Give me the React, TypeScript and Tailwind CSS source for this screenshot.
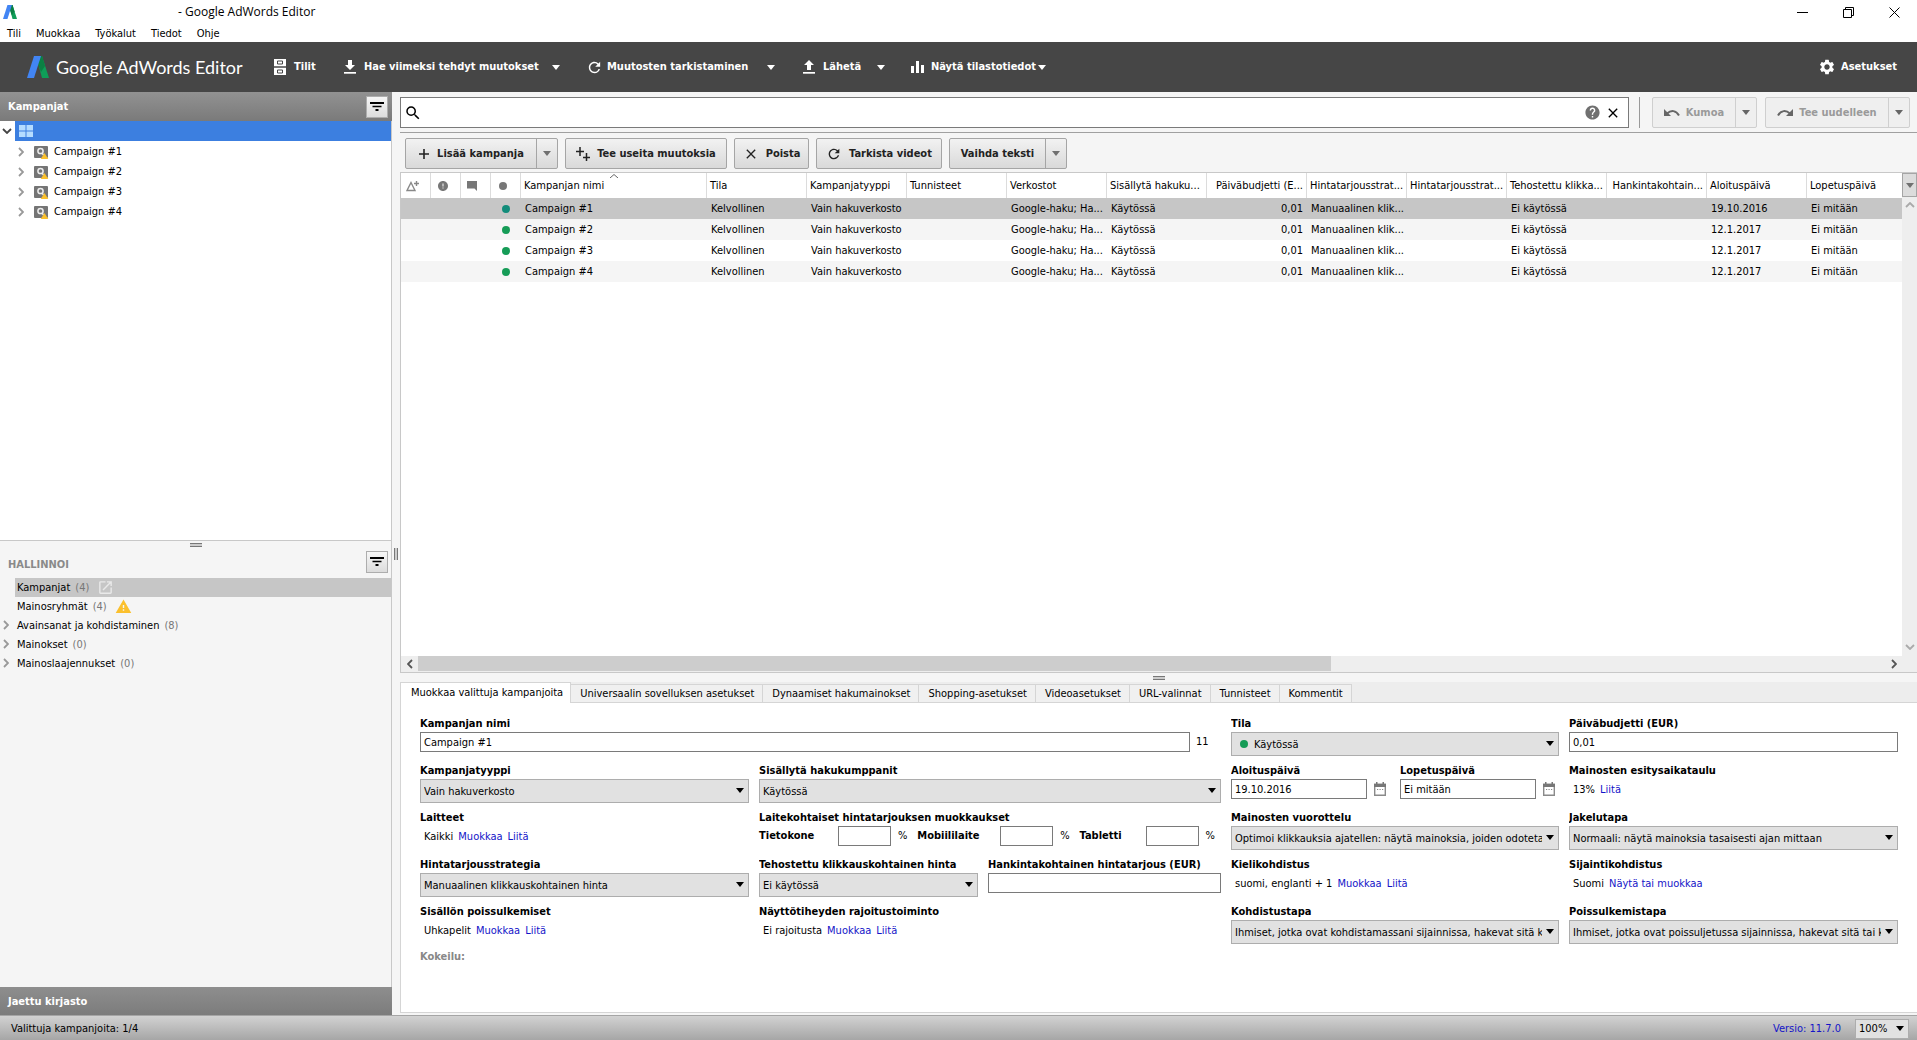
import { useState } from 'react';
import type { ReactNode } from 'react';
import { MdClose, MdError, MdHelp, MdOpenInNew, MdRefresh, MdSearch, MdSettings, MdWarning } from 'react-icons/md';

const campaigns = [
  { name: 'Campaign #1', start: '19.10.2016' },
  { name: 'Campaign #2', start: '12.1.2017' },
  { name: 'Campaign #3', start: '12.1.2017' },
  { name: 'Campaign #4', start: '12.1.2017' },
];

const columns = [
  { label: 'Tila' },
  { label: 'Kampanjatyyppi' },
  { label: 'Tunnisteet' },
  { label: 'Verkostot' },
  { label: 'Sisällytä hakuku...' },
  { label: 'Päiväbudjetti (E...', right: true },
  { label: 'Hintatarjousstrat...' },
  { label: 'Hintatarjousstrat...' },
  { label: 'Tehostettu klikka...' },
  { label: 'Hankintakohtain...', right: true },
  { label: 'Aloituspäivä' },
];

const manageItems = [
  { label: 'Kampanjat', count: 4, icon: 'open' },
  { label: 'Mainosryhmät', count: 4, icon: 'warning' },
  { label: 'Avainsanat ja kohdistaminen', count: 8, expandable: true },
  { label: 'Mainokset', count: 0, expandable: true },
  { label: 'Mainoslaajennukset', count: 0, expandable: true },
];

const tabs = [
  'Muokkaa valittuja kampanjoita',
  'Universaalin sovelluksen asetukset',
  'Dynaamiset hakumainokset',
  'Shopping-asetukset',
  'Videoasetukset',
  'URL-valinnat',
  'Tunnisteet',
  'Kommentit',
];

function Logo({ className }: { className: string }) {
  return (
    <svg viewBox="0 0 22 22" className={className} aria-hidden="true">
      <path d="M9 0h6l7 22h-7z" fill="#0f9d58" />
      <path d="M12 0h3l3 10-4 6-3-8z" fill="#0b8043" />
      <path d="M7 0h7L7 22H0z" fill="#4285f4" />
    </svg>
  );
}

function Caret({ className = '' }: { className?: string }) {
  return (
    <svg viewBox="0 0 8 5" className={`h-[5px] w-2 shrink-0 ${className}`} fill="currentColor" aria-hidden="true">
      <path d="M0 0h8L4 5z" />
    </svg>
  );
}

function Chevron({ className = '' }: { className?: string }) {
  return (
    <svg viewBox="0 0 6 10" className={`h-[10px] w-[6px] shrink-0 ${className}`} fill="none" stroke="currentColor" strokeWidth="1.8" aria-hidden="true">
      <path d="M1 1l4 4-4 4" />
    </svg>
  );
}

function PlusIcon() {
  return (
    <svg viewBox="0 0 12 12" className="h-3 w-3" stroke="currentColor" strokeWidth="1.6" aria-hidden="true">
      <path d="M6 1v10M1 6h10" />
    </svg>
  );
}

function DoublePlusIcon() {
  return (
    <svg viewBox="0 0 14 14" className="h-[14px] w-[14px]" stroke="currentColor" strokeWidth="1.5" aria-hidden="true">
      <path d="M4 0v9M0 4.500h8M10.500 6v8M7 10.500h7" />
    </svg>
  );
}

function TransferIcon({ up }: { up?: boolean }) {
  return (
    <svg viewBox="0 0 12 14" className="h-[14px] w-3" fill="currentColor" aria-hidden="true">
      <path d={up ? 'M6 0l5 5H8v5H4V5H1z' : 'M4 0h4v5h3l-5 5-5-5h3z'} />
      <path d="M0 12h12v1.700H0z" />
    </svg>
  );
}

function CabinetIcon() {
  return (
    <svg viewBox="0 0 12 16" className="h-4 w-3" fill="none" aria-hidden="true">
      <path d="M0 0h12v7.300H0zM0 8.700h12V16H0z" fill="#fff" />
      <path d="M3.500 2h5v3h-5zM3.500 11h5v3h-5z" stroke="#464646" strokeWidth="1" />
    </svg>
  );
}

function BarsIcon() {
  return (
    <svg viewBox="0 0 13 12" className="h-3 w-[13px]" fill="currentColor" aria-hidden="true">
      <path d="M0 5h3v7H0zM5 0h3v12H5zM10 4h3v8h-3z" />
    </svg>
  );
}

function TurnIcon({ flip }: { flip?: boolean }) {
  return (
    <svg viewBox="0 0 16 8" className="h-2 w-4" fill="none" aria-hidden="true">
      <g transform={flip ? 'translate(16 0) scale(-1 1)' : undefined}>
        <path d="M0 0v7h7z" fill="#666" />
        <path d="M3 4.500C7 1 12 1 15 6.500" stroke="#666" strokeWidth="2" />
      </g>
    </svg>
  );
}

function CalendarIcon() {
  return (
    <svg viewBox="0 0 12 14" className="h-[14px] w-3" fill="none" aria-hidden="true">
      <path d="M.7 2.500h10.600v10.800H.7z" stroke="#8a8a8a" strokeWidth="1.400" />
      <path d="M0 1.800h12V5H0zM2 0h1.500v2H2zM8.500 0H10v2H8.500z" fill="#777" />
      <path d="M3 7.500h1.200M5.500 7.500h1.200M8 7.500h1.200" stroke="#8a8a8a" strokeWidth="1.200" />
    </svg>
  );
}

function CampaignIcon() {
  return (
    <svg viewBox="0 0 15 15" className="h-[15px] w-[15px] shrink-0" fill="none" aria-hidden="true">
      <rect y="1" width="14" height="12" rx="1" fill="#757575" />
      <circle cx="6.500" cy="6" r="2.600" stroke="#eee" strokeWidth="1.500" />
      <path d="M8 8l1.500 2" stroke="#eee" strokeWidth="1.400" />
      <path d="M10.500 8l3.800 6H6.700z" fill="#fbc02d" />
    </svg>
  );
}

function FilterButton() {
  return (
    <button aria-label="Suodata" className="grid h-[22px] w-[22px] place-items-center border border-[#adadad] bg-gradient-to-b from-[#f6f6f6] to-[#dcdcdc] text-black">
      <svg viewBox="0 0 14 9" className="h-[9px] w-[14px]" fill="currentColor" aria-hidden="true">
        <path d="M0 0h14v2H0zM2.500 3.700h9v1.600h-9zM5.500 7h3v2h-3z" />
      </svg>
    </button>
  );
}

function MenuButton({ icon, label, width, caret = true }: { icon: ReactNode; label: string; width: string; caret?: boolean }) {
  return (
    <button className={`flex h-full items-center text-left ${width}`}>
      <span className="flex w-5 shrink-0">{icon}</span>
      <span className="whitespace-nowrap">{label}</span>
      {caret && <Caret className="mr-1 ml-auto" />}
    </button>
  );
}

function ToolButton({ icon, label, width, split }: { icon?: ReactNode; label: string; width: string; split?: boolean }) {
  return (
    <div className={`flex h-[31px] rounded-xs border border-[#a5a5a5] bg-gradient-to-b from-[#f2f2f2] to-[#d9d9d9] font-bold text-[#222] ${width}`}>
      <button className="flex flex-1 items-center justify-center gap-[7px] whitespace-nowrap">
        {icon}
        {label}
      </button>
      {split && (
        <button aria-label={`${label}: lisää`} className="grid w-[21px] place-items-center border-l border-[#a5a5a5] text-[#707070]">
          <Caret />
        </button>
      )}
    </div>
  );
}

function HistoryButton({ icon, label, width }: { icon: ReactNode; label: string; width: string }) {
  return (
    <div className={`flex h-[31px] rounded-xs border border-[#cfcfcf] bg-[#efefef] font-bold text-[#9a9a9a] ${width}`}>
      <button disabled className="flex flex-1 items-center justify-center gap-[6px] whitespace-nowrap">
        {icon}
        {label}
      </button>
      <button disabled aria-label={`${label}: lisää`} className="grid w-[21px] place-items-center border-l border-[#cfcfcf] text-[#666]">
        <Caret />
      </button>
    </div>
  );
}

function Label({ htmlFor, children }: { htmlFor?: string; children: ReactNode }) {
  return (
    <label htmlFor={htmlFor} className="block h-4 truncate font-bold leading-4">
      {children}
    </label>
  );
}

const inputClass = 'h-5 min-w-0 border border-[#7a7a7a] bg-white px-[3px] outline-none';

function SelectField({ id, label, value, dot }: { id: string; label: string; value: string; dot?: boolean }) {
  return (
    <div className="min-w-0">
      <Label htmlFor={id}>{label}</Label>
      <div className="relative">
        <select
          id={id}
          className={`h-6 w-full appearance-none border border-[#adadad] bg-[#e1e1e1] pt-px pr-4 outline-none ${dot ? 'pl-[22px]' : 'pl-[3px]'}`}
        >
          <option>{value}</option>
        </select>
        {dot && <span className="pointer-events-none absolute top-2 left-[9px] h-2 w-2 rounded-full bg-[#169c57]" />}
        <Caret className="pointer-events-none absolute top-[9px] right-[5px]" />
      </div>
    </div>
  );
}

function LinkField({ label, value, links }: { label: string; value: string; links: string[] }) {
  return (
    <div className="min-w-0">
      <Label>{label}</Label>
      <div className="flex h-6 gap-[5px] pl-1 leading-[22px]">
        <span>{value}</span>
        {links.map((l) => (
          <a key={l} href="#" className="text-[#1414c8]">
            {l}
          </a>
        ))}
      </div>
    </div>
  );
}

function DateField({ id, label, value }: { id: string; label: string; value: string }) {
  return (
    <div className="min-w-0 flex-1">
      <Label htmlFor={id}>{label}</Label>
      <div className="flex items-center">
        <input id={id} defaultValue={value} className={`${inputClass} flex-1`} />
        <button aria-label={`${label}: kalenteri`} className="w-[23px] pl-[7px]">
          <CalendarIcon />
        </button>
      </div>
    </div>
  );
}

function BidField({ id, label, width }: { id: string; label: string; width: string }) {
  return (
    <div className="flex items-center">
      <label htmlFor={id} className={`font-bold ${width}`}>
        {label}
      </label>
      <input id={id} className={`${inputClass} w-[53px]`} />
      <span className="ml-[7px]">%</span>
    </div>
  );
}

function Sidebar() {
  return (
    <aside className="flex w-[392px] shrink-0 flex-col">
      <div className="flex h-[29px] shrink-0 items-center justify-between bg-gradient-to-b from-[#929292] to-[#7a7a7a] pr-1 pl-2 font-bold text-white">
        <h2>Kampanjat</h2>
        <FilterButton />
      </div>
      <div className="flex-[419] border-r border-b border-[#c8c8c8] bg-white">
        <div className="flex h-5 items-center">
          <span className="grid w-[13px] place-items-center text-[#444]">
            <Chevron className="rotate-90" />
          </span>
          <div className="ml-[2px] flex h-full flex-1 items-center bg-[#3c7fe0] pl-1">
            <svg viewBox="0 0 14 12" className="h-3 w-[14px]" fill="#b5dcff" aria-hidden="true">
              <path d="M0 0h6.500v5.500H0zM7.500 0H14v5.500H7.500zM0 6.500h6.500V12H0zM7.500 6.500H14V12H7.500z" />
            </svg>
          </div>
        </div>
        <ul className="pt-px">
          {campaigns.map((c) => (
            <li key={c.name} className="flex h-5 items-center pl-[18px]">
              <Chevron className="mr-[10px] text-[#999]" />
              <CampaignIcon />
              <span className="ml-[5px]">{c.name}</span>
            </li>
          ))}
        </ul>
      </div>
      <div className="flex h-[10px] shrink-0 justify-center border-r border-[#c8c8c8] pt-[2px]">
        <span className="h-1 w-3 border-y border-[#777] bg-[#ccc]" />
      </div>
      <div className="flex-[437] border-r border-[#c8c8c8]">
        <div className="flex h-[27px] items-start justify-between pr-[3px] pl-2 font-bold text-[#8a8a8a]">
          <h2 className="leading-7">HALLINNOI</h2>
          <FilterButton />
        </div>
        <ul>
          {manageItems.map((item, i) => (
            <li key={item.label} className="flex h-[19px] items-center">
              <span className="w-[15px] pl-[3px] text-[#999]">{item.expandable && <Chevron />}</span>
              <span className={`flex h-full flex-1 items-center pt-px pl-[2px] ${i === 0 ? 'bg-[#c6c6c6]' : ''}`}>
                {item.label}
                <span className="ml-[5px] text-[#777]">({item.count})</span>
                {item.icon === 'open' && <MdOpenInNew className="ml-2 h-[17px] w-[17px] text-[#e9e9e9]" />}
                {item.icon === 'warning' && <MdWarning className="ml-2 h-[17px] w-[17px] text-[#fbc02d]" />}
              </span>
            </li>
          ))}
        </ul>
      </div>
      <h2 className="h-7 shrink-0 bg-gradient-to-b from-[#8e8e8e] to-[#7c7c7c] pl-2 leading-[30px] font-bold text-white">Jaettu kirjasto</h2>
    </aside>
  );
}

function CampaignTable() {
  const th = 'overflow-hidden border-r border-[#dcdcdc] pl-[3px] pt-px font-normal whitespace-nowrap';
  return (
    <table className="w-full table-fixed border-separate border-spacing-0 text-left">
      <colgroup>
        <col className="w-[30px]" />
        <col className="w-[30px]" />
        <col className="w-[30px]" />
        <col className="w-[30px]" />
        <col className="w-[186px]" />
        {columns.map((_, i) => (
          <col key={i} className="w-[100px]" />
        ))}
        <col />
      </colgroup>
      <thead>
        <tr className="h-[25px]">
          <th className={th} aria-label="Muutokset">
            <svg viewBox="0 0 14 12" className="ml-[2px] h-3 w-[14px]" fill="none" stroke="#888" strokeWidth="1.400" aria-hidden="true">
              <path d="M1 10.500L5 2.500l4 8zM10.500 1v5M8 3.500h5" />
            </svg>
          </th>
          <th className={th} aria-label="Virheet">
            <MdError className="ml-[3px] h-3 w-3 text-[#777]" />
          </th>
          <th className={th} aria-label="Kommentit">
            <svg viewBox="0 0 10 10" className="ml-[3px] h-[10px] w-[10px]" fill="#777" aria-hidden="true">
              <path d="M0 0h10v10L7.500 7.500H0z" />
            </svg>
          </th>
          <th className={th} aria-label="Tila">
            <span className="ml-[5px] block h-2 w-2 rounded-full bg-[#777]" />
          </th>
          <th className={`${th} relative`}>
            <svg viewBox="0 0 8 4" className="absolute top-px left-1/2 h-1 w-2 -translate-x-1/2" fill="none" stroke="#666" aria-hidden="true">
              <path d="M0 4l4-3.500L8 4" />
            </svg>
            Kampanjan nimi
          </th>
          {columns.map((c, i) => (
            <th key={i} className={`${th} ${c.right ? 'pr-[3px] text-right' : ''}`}>
              {c.label}
            </th>
          ))}
          <th className="overflow-hidden pt-px pl-[3px] font-normal whitespace-nowrap">Lopetuspäivä</th>
        </tr>
      </thead>
      <tbody>
        {campaigns.map((c, i) => (
          <tr
            key={c.name}
            className={`h-[21px] [&>td]:overflow-hidden [&>td]:pl-1 [&>td]:whitespace-nowrap ${i === 0 ? 'bg-[#c6c6c6]' : 'odd:bg-white even:bg-[#f5f5f5]'}`}
          >
            <td />
            <td />
            <td />
            <td>
              <span className={`ml-[7px] block h-2 w-2 rounded-full ${i === 0 ? 'bg-[#128c7a]' : 'bg-[#169c57]'}`} />
            </td>
            <td>{c.name}</td>
            <td>Kelvollinen</td>
            <td>Vain hakuverkosto</td>
            <td />
            <td>Google-haku; Ha...</td>
            <td>Käytössä</td>
            <td className="pr-1 text-right">0,01</td>
            <td>Manuaalinen klik...</td>
            <td />
            <td>Ei käytössä</td>
            <td />
            <td>{c.start}</td>
            <td>Ei mitään</td>
          </tr>
        ))}
      </tbody>
    </table>
  );
}

function EditPanel() {
  const [active, setActive] = useState(0);
  return (
    <section className="mb-[2px] border-b border-l border-[#d5d5d5] bg-white">
      <div role="tablist" className="flex h-[21px] items-end bg-[#ededed]">
        {tabs.map((t, i) => (
          <button
            key={t}
            role="tab"
            aria-selected={i === active}
            onClick={() => setActive(i)}
            className={
              i === active
                ? 'h-[21px] border-t border-r border-[#d5d5d5] bg-white pr-[7px] pl-[10px] whitespace-nowrap'
                : 'h-[19px] border-t border-r border-b border-[#d5d5d5] bg-[#f0f0f0] pr-2 pl-[9px] whitespace-nowrap'
            }
          >
            {t}
          </button>
        ))}
        <span className="h-full flex-1 border-b border-[#d5d5d5]" />
      </div>
      <form className="grid grid-cols-[329fr_462fr_328fr_329fr] gap-x-[10px] gap-y-[7px] pt-[13px] pr-[19px] pb-[49px] pl-[19px]">
        <div className="col-span-2 min-w-0">
          <Label htmlFor="name">Kampanjan nimi</Label>
          <div className="flex items-center">
            <input id="name" defaultValue="Campaign #1" className={`${inputClass} flex-1`} />
            <span className="w-[31px] pl-[6px]">11</span>
          </div>
        </div>
        <SelectField id="status" label="Tila" value="Käytössä" dot />
        <div className="min-w-0">
          <Label htmlFor="budget">Päiväbudjetti (EUR)</Label>
          <input id="budget" defaultValue="0,01" className={`${inputClass} block w-full`} />
        </div>

        <SelectField id="type" label="Kampanjatyyppi" value="Vain hakuverkosto" />
        <SelectField id="partners" label="Sisällytä hakukumppanit" value="Käytössä" />
        <div className="flex min-w-0 gap-[10px]">
          <DateField id="start" label="Aloituspäivä" value="19.10.2016" />
          <DateField id="end" label="Lopetuspäivä" value="Ei mitään" />
        </div>
        <LinkField label="Mainosten esitysaikataulu" value="13%" links={['Liitä']} />

        <LinkField label="Laitteet" value="Kaikki" links={['Muokkaa', 'Liitä']} />
        <fieldset className="min-w-0">
          <legend className="h-4 font-bold leading-4">Laitekohtaiset hintatarjouksen muokkaukset</legend>
          <div className="flex justify-between pr-[6px]">
            <BidField id="desktop" label="Tietokone" width="w-[79px]" />
            <BidField id="mobile" label="Mobiililaite" width="w-[83px]" />
            <BidField id="tablet" label="Tabletti" width="w-[66px]" />
          </div>
        </fieldset>
        <SelectField id="rotation" label="Mainosten vuorottelu" value="Optimoi klikkauksia ajatellen: näytä mainoksia, joiden odotetaan" />
        <SelectField id="delivery" label="Jakelutapa" value="Normaali: näytä mainoksia tasaisesti ajan mittaan" />

        <SelectField id="strategy" label="Hintatarjousstrategia" value="Manuaalinen klikkauskohtainen hinta" />
        <div className="grid min-w-0 grid-cols-[219fr_233fr] gap-[10px]">
          <SelectField id="ecpc" label="Tehostettu klikkauskohtainen hinta" value="Ei käytössä" />
          <div className="min-w-0">
            <Label htmlFor="cpa">Hankintakohtainen hintatarjous (EUR)</Label>
            <input id="cpa" className={`${inputClass} block w-full`} />
          </div>
        </div>
        <LinkField label="Kielikohdistus" value="suomi, englanti + 1" links={['Muokkaa', 'Liitä']} />
        <LinkField label="Sijaintikohdistus" value="Suomi" links={['Näytä tai muokkaa']} />

        <LinkField label="Sisällön poissulkemiset" value="Uhkapelit" links={['Muokkaa', 'Liitä']} />
        <LinkField label="Näyttötiheyden rajoitustoiminto" value="Ei rajoitusta" links={['Muokkaa', 'Liitä']} />
        <SelectField id="targeting" label="Kohdistustapa" value="Ihmiset, jotka ovat kohdistamassani sijainnissa, hakevat sitä kos" />
        <SelectField id="exclusion" label="Poissulkemistapa" value="Ihmiset, jotka ovat poissuljetussa sijainnissa, hakevat sitä tai ka" />

        <p className="leading-3 font-bold text-[#888]">Kokeilu:</p>
      </form>
    </section>
  );
}

export default function App() {
  return (
    <div className="flex h-screen flex-col bg-[#f5f5f5] font-['DejaVu_Sans_Condensed','DejaVu_Sans',sans-serif] text-[11px] leading-4 text-black">
      {/* window title and menus */}
      <header className="shrink-0 bg-white">
        <div className="flex h-6 items-center pr-[17px] pl-[3px]">
          <Logo className="h-[14px] w-[14px]" />
          <h1 className="ml-[161px] font-['Open_Sans',sans-serif] text-[12px]">- Google AdWords Editor</h1>
          <div className="ml-auto flex gap-[35px]">
            <button aria-label="Pienennä">
              <svg viewBox="0 0 11 11" className="h-[11px] w-[11px]" stroke="#000" aria-hidden="true">
                <path d="M0 5.500h11" />
              </svg>
            </button>
            <button aria-label="Palauta">
              <svg viewBox="0 0 11 11" className="h-[11px] w-[11px]" stroke="#000" fill="none" aria-hidden="true">
                <path d="M.5 2.500h8v8h-8zM2.500 2.500v-2h8v8h-2" />
              </svg>
            </button>
            <button aria-label="Sulje">
              <svg viewBox="0 0 11 11" className="h-[11px] w-[11px]" stroke="#000" aria-hidden="true">
                <path d="M.5.5l10 10M10.500.5l-10 10" />
              </svg>
            </button>
          </div>
        </div>
        <nav className="flex h-[18px] items-center gap-[15px] pt-px pl-[7px]">
          {['Tili', 'Muokkaa', 'Työkalut', 'Tiedot', 'Ohje'].map((m) => (
            <button key={m}>{m}</button>
          ))}
        </nav>
      </header>

      {/* dark toolbar */}
      <div className="flex h-[50px] shrink-0 items-center bg-[#464646] pr-5 pl-[27px] font-bold text-white">
        <Logo className="h-[22px] w-[22px]" />
        <span className="ml-[7px] w-[218px] font-['Lato',sans-serif] text-[18px] font-normal whitespace-nowrap">Google AdWords Editor</span>
        <MenuButton icon={<CabinetIcon />} label="Tilit" width="w-[70px]" caret={false} />
        <MenuButton icon={<TransferIcon />} label="Hae viimeksi tehdyt muutokset" width="w-[220px] mr-[23px]" />
        <MenuButton icon={<MdRefresh className="-ml-px h-[17px] w-[17px]" />} label="Muutosten tarkistaminen" width="w-[192px] mr-[24px]" />
        <MenuButton icon={<TransferIcon up />} label="Lähetä" width="w-[86px] mr-[22px]" />
        <MenuButton icon={<BarsIcon />} label="Näytä tilastotiedot" width="w-[139px]" />
        <button className="ml-auto flex items-center gap-[5px]">
          <MdSettings className="h-[18px] w-[18px]" />
          Asetukset
        </button>
      </div>

      <main className="flex min-h-0 flex-1">
        <Sidebar />
        <div className="flex w-2 shrink-0 items-center justify-center">
          <span className="h-3 w-1 border-x border-[#777] bg-[#ccc]" />
        </div>

        <div className="flex min-w-0 flex-1 flex-col">
          <div className="flex h-[41px] shrink-0 items-start border-b border-[#a0a0a0] pt-[5px] pr-[7px]">
            <div className="flex h-[31px] min-w-0 flex-1 items-center border border-[#7a7a7a] bg-white px-[3px]">
              <MdSearch className="h-[18px] w-[18px]" />
              <input aria-label="Haku" className="h-full min-w-0 flex-1 outline-none" />
              <MdHelp className="h-[17px] w-[17px] text-[#707070]" />
              <button aria-label="Tyhjennä" className="mr-1 ml-1">
                <MdClose className="h-4 w-4" />
              </button>
            </div>
            <span className="mr-3 ml-[10px] h-[31px] w-px bg-[#999]" />
            <HistoryButton icon={<TurnIcon />} label="Kumoa" width="mr-2 w-[105px]" />
            <HistoryButton icon={<TurnIcon flip />} label="Tee uudelleen" width="w-[145px]" />
          </div>

          <div className="flex shrink-0 gap-[7px] px-[5px] pt-[5px] pb-[3px]">
            <ToolButton icon={<PlusIcon />} label="Lisää kampanja" width="w-[153px]" split />
            <ToolButton icon={<DoublePlusIcon />} label="Tee useita muutoksia" width="w-[162px]" />
            <ToolButton icon={<MdClose className="h-4 w-4" />} label="Poista" width="w-[75px]" />
            <ToolButton icon={<MdRefresh className="h-4 w-4" />} label="Tarkista videot" width="w-[126px]" />
            <ToolButton label="Vaihda teksti" width="w-[118px]" split />
          </div>

          <div className="flex min-h-0 flex-1 flex-col border-y border-l border-[#c8c8c8]">
            <div className="flex min-h-0 flex-1">
              <div className="min-w-0 flex-1 overflow-hidden bg-white">
                <CampaignTable />
              </div>
              <div className="flex w-[15px] shrink-0 flex-col items-center bg-[#eee] text-[#aaa]">
                <button aria-label="Sarakkeet" className="grid h-6 w-full shrink-0 place-items-center border border-[#a5a5a5] bg-[#dcdcdc] text-[#707070]">
                  <Caret />
                </button>
                <Chevron className="mt-[3px] -rotate-90" />
                <Chevron className="mt-auto mb-1 rotate-90" />
              </div>
            </div>
            <div className="flex h-4 shrink-0 items-center bg-[#eee] pr-5 text-[#555]">
              <span className="grid w-[17px] shrink-0 place-items-center">
                <Chevron className="rotate-180" />
              </span>
              <div className="flex h-full flex-1 pb-px">
                <span className="h-full w-[62%] bg-[#cdcdcd]" />
              </div>
              <Chevron />
            </div>
          </div>

          <div className="flex h-[9px] shrink-0 items-center justify-center">
            <span className="h-1 w-3 border-y border-[#777] bg-[#ccc]" />
          </div>
          <EditPanel />
        </div>
      </main>

      <footer className="flex h-[25px] shrink-0 items-center border-t border-[#a5a5a5] bg-gradient-to-b from-[#d2d2d2] to-[#a6a6a6] pt-px pr-2 pl-[11px]">
        <span>Valittuja kampanjoita: 1/4</span>
        <a href="#" className="mr-[14px] ml-auto text-[#1414c8]">
          Versio: 11.7.0
        </a>
        <div className="relative">
          <select aria-label="Zoomaus" className="block h-5 w-[54px] appearance-none border border-[#adadad] bg-[#e1e1e1] pl-[3px] outline-none">
            <option>100%</option>
          </select>
          <Caret className="pointer-events-none absolute top-[7px] right-[5px]" />
        </div>
      </footer>
    </div>
  );
}
